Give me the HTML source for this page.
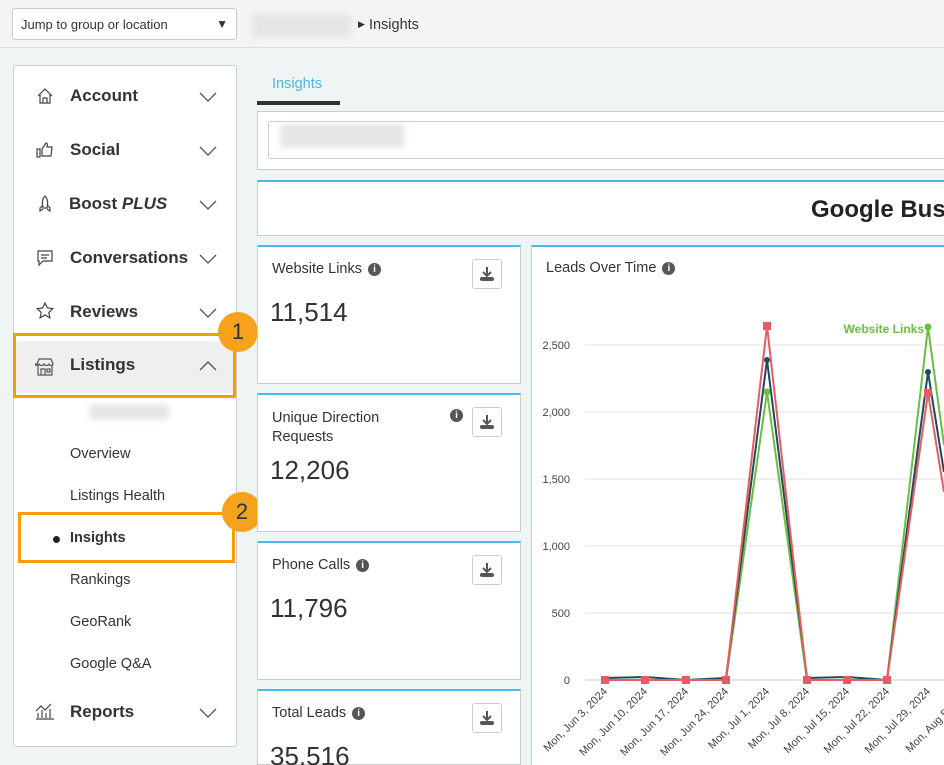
<!DOCTYPE html>
<html><head><meta charset="utf-8"><style>
*{box-sizing:border-box;margin:0;padding:0}
html,body{width:944px;height:765px;overflow:hidden}
body{background:#eef5f4;font-family:"Liberation Sans","DejaVu Sans",sans-serif;color:#333;position:relative}
#wrap{position:absolute;left:0;top:0;width:944px;height:765px;overflow:hidden}
.abs{position:absolute}
.top{left:0;top:0;width:944px;height:48px;background:#f4f4f4;border-bottom:1px solid #ddd}
.sel{left:12px;top:8px;width:225px;height:32px;background:#fff;border:1px solid #ccc;border-radius:3px;font-size:13px;padding:8px 8px;color:#333}
.blur{background:#e6e6e6;filter:blur(3px);border-radius:4px}
.side{left:13px;top:65px;width:224px;height:682px;background:#fff;border:1px solid #ccc;border-radius:3px}
.mi{position:absolute;left:70px;font-size:17px;font-weight:bold;color:#333}
.chev{position:absolute;left:199px;width:18px;height:10px}
.sub{position:absolute;left:70px;font-size:14.5px;color:#333}
.card{position:absolute;background:#fff;border:1px solid #ccc;border-top:2px solid #4cb8e6}
.ct{position:absolute;left:14px;font-size:14.5px;color:#333}
.num{position:absolute;left:12px;font-size:26px;color:#333}
.dl{position:absolute;left:214px;top:12px;width:30px;height:30px;border:1px solid #ccc;border-radius:3px;background:#fff}
.info{display:inline-block;width:13px;height:13px;border-radius:50%;background:#555;color:#fff;font-size:10px;font-weight:bold;text-align:center;line-height:13px;vertical-align:1px;margin-left:6px}
.ob{position:absolute;border:3px solid #f59f00}
.badge{position:absolute;width:40px;height:40px;border-radius:50%;background:#f6a21c;color:#1e3550;font-size:22px;text-align:center;line-height:40px}
</style></head><body><div id="wrap">
<div class="abs top"></div>
<div class="abs sel">Jump to group or location<span style="position:absolute;right:8px;top:8px;font-size:12px">▼</span></div>
<div class="abs blur" style="left:252px;top:14px;width:100px;height:24px"></div>
<div class="abs" style="left:358px;top:17px;font-size:14.5px"><span style="font-size:9px;vertical-align:2px">▶</span> Insights</div>

<div class="abs side">
 <svg class="abs" style="left:22px;top:21px" width="18" height="18" viewBox="0 0 18 18" fill="none" stroke="#444" stroke-width="1.2"><path d="M2 9 9 2l7 7M4 7v9h10V7M7 16v-5h4v5"/></svg>
 <div class="mi" style="top:20px;left:56px">Account</div><svg class="chev" style="top:26px;left:185px" viewBox="0 0 18 10"><path d="M1 1l8 8 8-8" fill="none" stroke="#555" stroke-width="1.3"/></svg>
 <svg class="abs" style="left:22px;top:75px" width="18" height="18" viewBox="0 0 18 18" fill="none" stroke="#444" stroke-width="1.2"><path d="M1 8h3v8H1zM6 8l4-6c1 0 2 1 1 4h5l-1 9H6z"/></svg>
 <div class="mi" style="top:74px;left:56px">Social</div><svg class="chev" style="top:80px;left:185px" viewBox="0 0 18 10"><path d="M1 1l8 8 8-8" fill="none" stroke="#555" stroke-width="1.3"/></svg>
 <svg class="abs" style="left:22px;top:129px" width="18" height="18" viewBox="0 0 18 18" fill="none" stroke="#444" stroke-width="1.2"><path d="M9 1c3 3 3 8 2 12H7C6 9 6 4 9 1zM7 10l-3 3v3l3-2M11 10l3 3v3l-3-2"/></svg>
 <div class="mi" style="top:128px;left:55px">Boost <i>PLUS</i></div><svg class="chev" style="top:134px;left:185px" viewBox="0 0 18 10"><path d="M1 1l8 8 8-8" fill="none" stroke="#555" stroke-width="1.3"/></svg>
 <svg class="abs" style="left:22px;top:183px" width="18" height="18" viewBox="0 0 18 18" fill="none" stroke="#444" stroke-width="1.2"><path d="M2 2h14v10H7l-4 4v-4H2zM5 6h8M5 9h6"/></svg>
 <div class="mi" style="top:182px;left:56px">Conversations</div><svg class="chev" style="top:188px;left:185px" viewBox="0 0 18 10"><path d="M1 1l8 8 8-8" fill="none" stroke="#555" stroke-width="1.3"/></svg>
 <svg class="abs" style="left:22px;top:236px" width="18" height="18" viewBox="0 0 18 18" fill="none" stroke="#444" stroke-width="1.2"><path d="M9 1l2.4 5 5.4.6-4 3.8 1.1 5.4L9 13l-4.9 2.8 1.1-5.4-4-3.8L6.6 6z"/></svg>
 <div class="mi" style="top:236px;left:56px">Reviews</div><svg class="chev" style="top:242px;left:185px" viewBox="0 0 18 10"><path d="M1 1l8 8 8-8" fill="none" stroke="#555" stroke-width="1.3"/></svg>
 <div class="abs" style="left:2px;top:275px;width:218px;height:52px;background:#efefef"></div>
 <svg class="abs" style="left:21px;top:291px" width="20" height="20" viewBox="0 0 20 20" fill="none" stroke="#555" stroke-width="1.2"><path d="M2 7l2-5h12l2 5c0 2-3 2-4 0-1 2-4 2-5 0-1 2-4 2-5 0-1 2-4 2-4 0zM3 9v9h14V9M6 18v-6h4v6M12 12h3v3h-3z"/></svg>
 <div class="mi" style="top:289px;left:56px">Listings</div><svg class="chev" style="top:295px;left:185px" viewBox="0 0 18 10"><path d="M1 9l8-8 8 8" fill="none" stroke="#555" stroke-width="1.3"/></svg>
 <div class="abs blur" style="left:75px;top:338px;width:80px;height:16px"></div>
 <div class="sub" style="top:380px;left:56px">Overview</div>
 <div class="sub" style="top:422px;left:56px">Listings Health</div>
 <div class="abs" style="left:39px;top:470px;width:7px;height:7px;border-radius:50%;background:#222"></div>
 <div class="sub" style="top:464px;left:56px;font-weight:bold">Insights</div>
 <div class="sub" style="top:506px;left:56px">Rankings</div>
 <div class="sub" style="top:548px;left:56px">GeoRank</div>
 <div class="sub" style="top:590px;left:56px">Google Q&amp;A</div>
 <svg class="abs" style="left:21px;top:636px" width="20" height="18" viewBox="0 0 20 18" fill="none" stroke="#444" stroke-width="1.2"><path d="M1 17h18M3 16v-5M7 16v-8M11 16v-5M15 16V7M1 9l5-5 4 4 6-6"/></svg>
 <div class="mi" style="top:636px;left:56px">Reports</div><svg class="chev" style="top:642px;left:185px" viewBox="0 0 18 10"><path d="M1 1l8 8 8-8" fill="none" stroke="#555" stroke-width="1.3"/></svg>
</div>
<div class="ob" style="left:13px;top:333px;width:223px;height:65px"></div>
<div class="badge" style="left:218px;top:312px">1</div>
<div class="ob" style="left:18px;top:512px;width:217px;height:51px"></div>
<div class="badge" style="left:222px;top:492px">2</div>

<div class="abs" style="left:272px;top:76px;font-size:14.5px;color:#4cb8e6">Insights</div>
<div class="abs" style="left:257px;top:101px;width:83px;height:4px;background:#333"></div>
<div class="abs" style="left:257px;top:111px;width:700px;height:59px;background:#fff;border:1px solid #ccc"></div>
<div class="abs" style="left:268px;top:121px;width:700px;height:38px;background:#fff;border:1px solid #ccc;border-radius:3px"></div>
<div class="abs blur" style="left:280px;top:124px;width:125px;height:24px"></div>
<div class="card" style="left:257px;top:180px;width:700px;height:56px"><div class="abs" style="left:553px;top:14px;font-size:24px;font-weight:bold;color:#222;white-space:nowrap">Google Business Profile</div></div>

<div class="card" style="left:257px;top:245px;width:264px;height:139px"><div class="ct" style="top:14px">Website Links<span class="info">i</span></div><div class="num" style="top:50px">11,514</div><div class="dl"><svg width="28" height="28" viewBox="0 0 28 28"><path d="M14 7v9M10 12l4 4 4-4" stroke="#555" stroke-width="2" fill="none"/><rect x="7" y="17" width="14" height="4" rx="2" fill="#555"/></svg></div></div>
<div class="card" style="left:257px;top:393px;width:264px;height:139px"><div class="ct" style="top:14px;line-height:19px">Unique Direction<br>Requests</div><span class="info abs" style="left:186px;top:14px">i</span><div class="num" style="top:60px">12,206</div><div class="dl"><svg width="28" height="28" viewBox="0 0 28 28"><path d="M14 7v9M10 12l4 4 4-4" stroke="#555" stroke-width="2" fill="none"/><rect x="7" y="17" width="14" height="4" rx="2" fill="#555"/></svg></div></div>
<div class="card" style="left:257px;top:541px;width:264px;height:139px"><div class="ct" style="top:14px">Phone Calls<span class="info">i</span></div><div class="num" style="top:50px">11,796</div><div class="dl"><svg width="28" height="28" viewBox="0 0 28 28"><path d="M14 7v9M10 12l4 4 4-4" stroke="#555" stroke-width="2" fill="none"/><rect x="7" y="17" width="14" height="4" rx="2" fill="#555"/></svg></div></div>
<div class="card" style="left:257px;top:689px;width:264px;height:76px"><div class="ct" style="top:14px">Total Leads<span class="info">i</span></div><div class="num" style="top:50px">35,516</div><div class="dl"><svg width="28" height="28" viewBox="0 0 28 28"><path d="M14 7v9M10 12l4 4 4-4" stroke="#555" stroke-width="2" fill="none"/><rect x="7" y="17" width="14" height="4" rx="2" fill="#555"/></svg></div></div>

<div class="card" style="left:531px;top:245px;width:413px;height:520px;border-right:none;border-bottom:none"></div>
<div class="abs" style="left:546px;top:260px;font-size:14.5px">Leads Over Time<span class="info">i</span></div>
<svg class="abs" style="left:0;top:0" width="944" height="765" font-family="Liberation Sans, sans-serif">
 <g stroke="#e2e2e2" stroke-width="1">
  <path d="M585 345H944M585 412H944M585 479H944M585 546H944M585 613H944"/>
 </g>
 <path d="M585 680H944" stroke="#ccd" stroke-width="1"/>
 <g font-size="11" fill="#444" text-anchor="end">
  <text x="570" y="349">2,500</text><text x="570" y="416">2,000</text><text x="570" y="483">1,500</text><text x="570" y="550">1,000</text><text x="570" y="617">500</text><text x="570" y="684">0</text>
 </g>
 <polyline fill="none" stroke="#6abf3f" stroke-width="2" points="605,680 645,680 686,680 726,680 767,392 807,680 847,680 887,680 928,327 944,445"/>
 <polyline fill="none" stroke="#1f4a5e" stroke-width="2" points="605,678 645,677 686,680 726,678 767,360 807,678 847,677 887,680 928,372 944,472"/>
 <polyline fill="none" stroke="#e85b60" stroke-width="2" points="605,680 645,680 686,680 726,680 767,326 807,680 847,680 887,680 928,393 944,492"/>
 <g fill="#6abf3f"><circle cx="767" cy="392" r="3.5"/><circle cx="928" cy="327" r="3.5"/></g>
 <g fill="#1f4a5e"><circle cx="767" cy="360" r="3"/><circle cx="928" cy="372" r="3"/></g>
 <g fill="#e85b60"><rect x="601" y="676" width="8" height="8"/><rect x="641" y="676" width="8" height="8"/><rect x="682" y="676" width="8" height="8"/><rect x="722" y="676" width="8" height="8"/><rect x="763" y="322" width="8" height="8"/><rect x="803" y="676" width="8" height="8"/><rect x="843" y="676" width="8" height="8"/><rect x="883" y="676" width="8" height="8"/><rect x="924" y="389" width="8" height="8"/></g>
 <text x="924" y="333" font-size="12" font-weight="bold" fill="#6abf3f" text-anchor="end">Website Links</text>
 <g font-size="11" fill="#444" text-anchor="end">
  <text transform="translate(608,692) rotate(-45)">Mon, Jun 3, 2024</text>
  <text transform="translate(648,692) rotate(-45)">Mon, Jun 10, 2024</text>
  <text transform="translate(689,692) rotate(-45)">Mon, Jun 17, 2024</text>
  <text transform="translate(729,692) rotate(-45)">Mon, Jun 24, 2024</text>
  <text transform="translate(770,692) rotate(-45)">Mon, Jul 1, 2024</text>
  <text transform="translate(810,692) rotate(-45)">Mon, Jul 8, 2024</text>
  <text transform="translate(850,692) rotate(-45)">Mon, Jul 15, 2024</text>
  <text transform="translate(890,692) rotate(-45)">Mon, Jul 22, 2024</text>
  <text transform="translate(931,692) rotate(-45)">Mon, Jul 29, 2024</text>
  <text transform="translate(971,692) rotate(-45)">Mon, Aug 5, 2024</text>
 </g>
</svg>
</div></body></html>
